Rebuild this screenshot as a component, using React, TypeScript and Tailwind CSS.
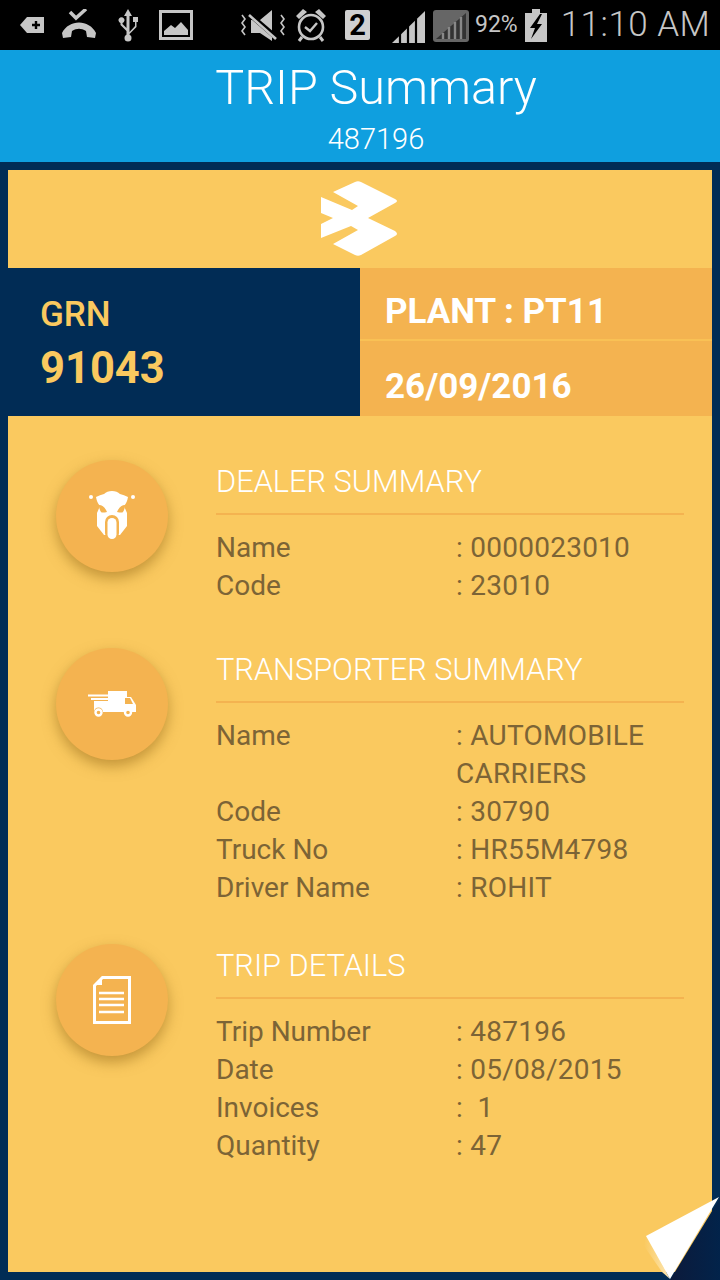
const font = '[font-family:Roboto,sans-serif]'

function StatusBar() {
  return (
    <div className="relative flex h-[50px] items-center bg-black pl-[19px] text-[#c6c6c6]">
      {/* notification icons */}
      <svg width="26" height="26" viewBox="0 0 26 26" className="mr-[16px]">
        <path d="M1 13 L8 5 H25 V21 H8 Z" fill="currentColor" />
        <path d="M13 13 H21 M17 9 V17" stroke="#000" strokeWidth="2.4" />
      </svg>
      <svg width="36" height="32" viewBox="0 0 36 32" className="mr-[20px]">
        <path d="M9 3 L15 9 L25 0" fill="none" stroke="currentColor" strokeWidth="3.5" />
        <path d="M1 24 C8 10 28 10 35 24 L34 29 L26 28 L25 22 C20 19 16 19 11 22 L10 28 L2 29 Z" fill="currentColor" />
      </svg>
      <svg width="22" height="34" viewBox="0 0 22 34" className="mr-[20px]">
        <path d="M11 1 L15 8 H12.5 V24 L18 18 V14 H16 V9 H21 V14 H19.5 V19 L12.5 26 V29 H9.5 V23 L3.5 17 V15 A3 3 0 1 1 5.5 15 V16 L9.5 20 V8 H7 Z" fill="currentColor" />
        <circle cx="11" cy="30" r="3.5" fill="currentColor" />
      </svg>
      <svg width="34" height="30" viewBox="0 0 34 30" className="mr-[47px]">
        <rect x="1.5" y="1.5" width="31" height="27" fill="none" stroke="currentColor" strokeWidth="3" />
        <path d="M5 25 L5 21 L12 15 L16 18 L22 12 L29 20 V25 Z" fill="currentColor" />
      </svg>
      <svg width="46" height="32" viewBox="0 0 46 32" className="mr-[9px]">
        <path d="M11 11 H20 L32 1 V24 Z M11 11 V24 H20 L32 32 V24 Z" fill="currentColor" />
        <path d="M8 4 L38 30" stroke="#000" strokeWidth="5" />
        <path d="M9 6 L36 30" stroke="currentColor" strokeWidth="2.6" />
        <path d="M2 6 L5 10 L2 14 L5 18 L2 22 L5 26" fill="none" stroke="currentColor" strokeWidth="1.6" />
        <path d="M41 6 L44 10 L41 14 L44 18 L41 22 L44 26" fill="none" stroke="currentColor" strokeWidth="1.6" />
      </svg>
      <svg width="32" height="34" viewBox="0 0 32 34" className="mr-[18px]">
        <circle cx="16" cy="19" r="12" fill="none" stroke="currentColor" strokeWidth="2.6" />
        <path d="M10 19 L15 23 L22 15" fill="none" stroke="currentColor" strokeWidth="2.4" />
        <path d="M1 8 L8 1 L12 4 L4 11 Z M31 8 L24 1 L20 4 L28 11 Z" fill="currentColor" />
        <path d="M7 29 L4 33 M25 29 L28 33" stroke="currentColor" strokeWidth="3" />
      </svg>
      <div className={`${font} flex h-[30px] w-[25px] items-center justify-center rounded-[2px] bg-[#d0d0d0] text-[29px] font-bold leading-none text-black`}>
        2
      </div>
      <svg width="34" height="32" viewBox="0 0 34 32" className="ml-[22px] mt-[4px]">
        <path d="M0 32 L33 0 V32 Z" fill="currentColor" />
        <path d="M8 32 V22 M16 32 V15 M24 32 V8" stroke="#000" strokeWidth="2.2" />
      </svg>
      <svg width="36" height="32" viewBox="0 0 36 32" className="ml-[7px] mt-[1px]">
        <rect width="36" height="32" rx="3" fill="#666" />
        <path d="M3 29 L33 3 V29 Z" fill="#333" />
        <path d="M10 29 V23 M16 29 V17 M22 29 V12 M28 29 V7" stroke="#888" strokeWidth="2.4" />
      </svg>
      <span className={`${font} ml-[6px] mt-[-1px] text-[23px] leading-none`}>92%</span>
      <svg width="22" height="34" viewBox="0 0 22 34" className="ml-[7px]">
        <path d="M0 5 H7 V1 H15 V5 H22 V34 H0 Z" fill="currentColor" />
        <path d="M15 6 L5 20 H10 L6 31 L17 16 H12 L17 6 Z" fill="#000" />
      </svg>
      <span className={`${font} ml-[14px] mt-[-1px] whitespace-nowrap text-[35px] font-light leading-none tracking-[0.5px]`}>11:10 AM</span>
    </div>
  )
}

function RoundIcon({ children }: { children: React.ReactNode }) {
  return (
    <div className="flex h-[112px] w-[112px] shrink-0 items-center justify-center rounded-full bg-[#f4b350] shadow-[0_6px_14px_rgba(150,105,25,0.55)]">
      {children}
    </div>
  )
}

function Section({ icon, title, rows, className }: {
  icon: React.ReactNode
  title: string
  rows: [string, string][]
  className?: string
}) {
  return (
    <div className={`flex ${className ?? ''}`}>
      <RoundIcon>{icon}</RoundIcon>
      <div className="ml-[48px] flex-1 pt-[4px]">
        <div className="border-b-2 border-[#f4b350] pb-[14px] pt-[1px] text-[30.75px] font-light leading-[34px] text-white">
          {title}
        </div>
        <div className="mt-[14px] text-[28px] leading-[38px] text-[#7c6436]">
          {rows.map(([label, value]) => (
            <div key={label} className="flex">
              <div className="w-[240px] shrink-0">{label}</div>
              <div className="whitespace-pre-wrap tracking-[0.25px]">{value}</div>
            </div>
          ))}
        </div>
      </div>
    </div>
  )
}

export default function App() {
  return (
    <div className={`${font} relative flex h-[1280px] w-[720px] flex-col overflow-hidden bg-[#012c55]`}>
      <StatusBar />

      {/* title bar */}
      <div className="flex h-[112px] flex-col items-center bg-[#0f9fdf] pl-[32px] text-white">
        <div className="mt-[10px] text-[48.5px] font-light leading-[56px]">TRIP Summary</div>
        <div className="mt-[7px] text-[29px] font-light leading-[32px]">487196</div>
      </div>

      <div className="mx-[8px] mt-[8px] flex h-[1102px] flex-col bg-[#fac95f]">
        <div className="flex h-[98px] items-center justify-center">
          <svg width="78" height="76" viewBox="0 0 78 76">
            <path
              d="M12 11 L34 1 Q37 -0.5 40 1 L74 18 Q78 20 74 22 L47 37 L74 50 Q78 53 74 55 L40 74 Q37 75.5 34 74 L12 63 L37 49 L30 45 L0 57 V43 L12 37 L0 32 V16 L31 29 L37 25 Z"
              fill="#fff"
            />
          </svg>
        </div>

        <div className="flex h-[148px]">
          <div className="w-[352px] bg-[#012c55] pl-[32px] pt-[27px] font-bold text-[#fac95f]">
            <div className="text-[35px] font-medium leading-[40px]">GRN</div>
            <div className="mt-[9px] text-[43.5px] leading-[50px]">91043</div>
          </div>
          <div className="flex flex-1 flex-col bg-[#f4b350] font-bold text-white">
            <div className="h-[73px] border-b-2 border-[#f9c155] pl-[25px] pt-[23px] text-[35px] leading-[42px]">
              PLANT : PT11
            </div>
            <div className="pl-[25px] pt-[26px] text-[35px] leading-[40px]">26/09/2016</div>
          </div>
        </div>

        <div className="pl-[48px] pr-[28px] pt-[44px]">
          <Section
            title="DEALER SUMMARY"
            rows={[['Name', ': 0000023010'], ['Code', ': 23010']]}
            icon={
              <svg width="48" height="50" viewBox="0 0 48 50">
                <circle cx="3" cy="6" r="2" fill="#fff" />
                <circle cx="45" cy="6" r="2" fill="#fff" />
                <path
                  d="M8 6 Q12 4 16 3 Q19 0 24 0 Q29 0 32 3 Q36 4 40 6 Q39 12 36 15 L39 22 V35 L32 44 H16 L9 35 V22 L12 15 Q9 12 8 6 Z"
                  fill="#fff"
                />
                <path d="M11 14 Q16 14 19 21 Q14 22 13 21 Q11 18 11 14 Z M37 14 Q32 14 29 21 Q34 22 35 21 Q37 18 37 14 Z" fill="#f4b350" />
                <rect x="17" y="24" width="14" height="25" rx="7" fill="#f4b350" />
                <rect x="19.5" y="27" width="9" height="21" rx="4.5" fill="#fff" />
              </svg>
            }
          />
          <Section
            className="mt-[43px]"
            title="TRANSPORTER SUMMARY"
            rows={[
              ['Name', ': AUTOMOBILE\nCARRIERS'],
              ['Code', ': 30790'],
              ['Truck No', ': HR55M4798'],
              ['Driver Name', ': ROHIT'],
            ]}
            icon={
              <svg width="48" height="26" viewBox="0 0 48 26">
                <path d="M20 0 H39 V6 H43 L48 14 V21 H44 A4.5 4.5 0 0 0 36 21 H15 A4.5 4.5 0 0 0 6 21 V10 H20 Z" fill="#fff" />
                <path d="M0 4.5 H20 M3 8 H20" stroke="#fff" strokeWidth="2" />
                <path d="M37 7 H42 L45 13 H37 Z" fill="#f4b350" />
                <circle cx="10.5" cy="21.5" r="3" fill="#f4b350" stroke="#fff" strokeWidth="2.4" />
                <circle cx="40" cy="21.5" r="3" fill="#f4b350" stroke="#fff" strokeWidth="2.4" />
              </svg>
            }
          />
          <Section
            className="mt-[37px]"
            title="TRIP DETAILS"
            rows={[
              ['Trip Number', ': 487196'],
              ['Date', ': 05/08/2015'],
              ['Invoices', ':  1'],
              ['Quantity', ': 47'],
            ]}
            icon={
              <svg width="38" height="48" viewBox="0 0 38 48">
                <path d="M9.5 1.5 H36.5 V46.5 H1.5 V9.5 Z" fill="none" stroke="#fff" strokeWidth="3" />
                <path d="M9 2 V9 H2 Z" fill="#fff" />
                <path d="M6 17 H31 M6 23 H31 M6 29 H31 M6 36 H31" stroke="#fff" strokeWidth="2.6" />
              </svg>
            }
          />
        </div>
      </div>

      {/* page curl */}
      <svg width="80" height="84" viewBox="0 0 80 84" className="absolute bottom-0 right-0">
        <defs>
          <linearGradient id="curl" x1="0" y1="0" x2="1" y2="0">
            <stop offset="0" stopColor="#0c1a3b" />
            <stop offset="1" stopColor="#02234a" />
          </linearGradient>
          <linearGradient id="curlEdge" x1="0" y1="0" x2="1" y2="0">
            <stop offset="0" stopColor="#fac95f" />
            <stop offset="1" stopColor="#fde7b4" />
          </linearGradient>
        </defs>
        <path d="M80 2 V84 H30 Z" fill="url(#curl)" />
        <path d="M6 40 L30 83 L22 76 L4 50 Z" fill="url(#curlEdge)" />
        <path d="M6 40 L79 1 L30 83 Z" fill="#fff" />
      </svg>
    </div>
  )
}
